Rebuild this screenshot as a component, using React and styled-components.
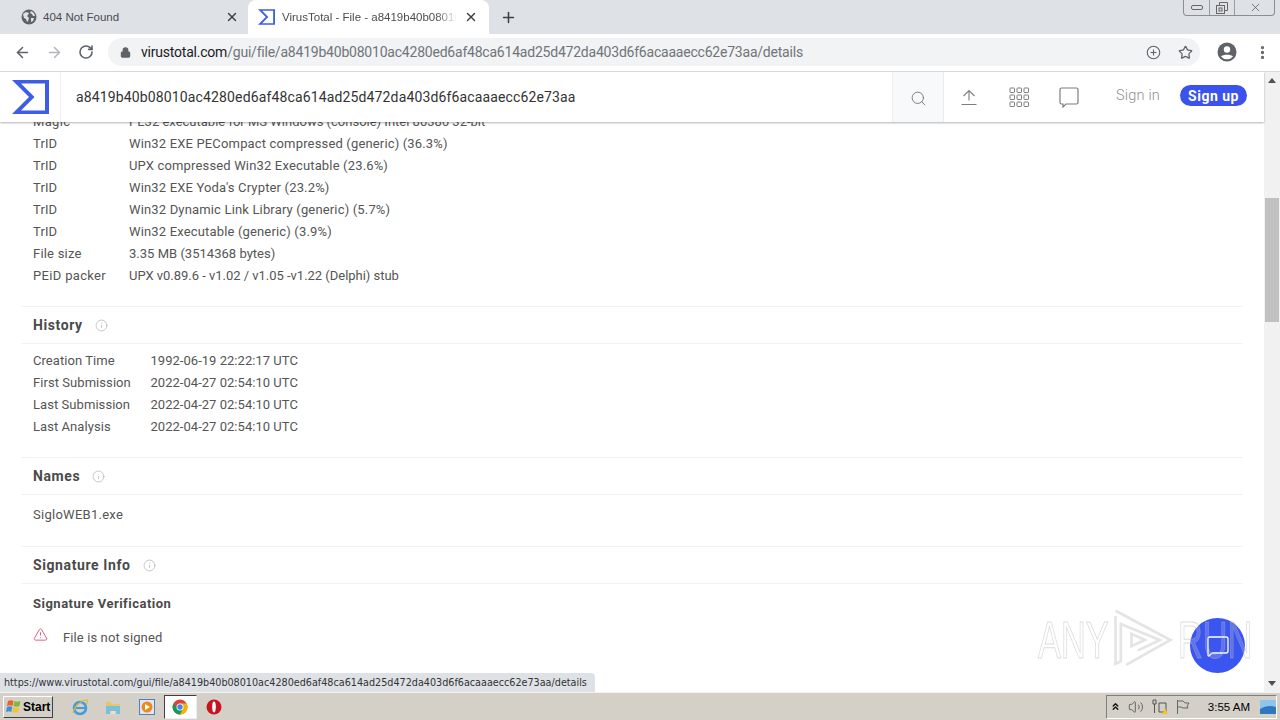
import React from "react";
import styled, { createGlobalStyle } from "styled-components";
import { ArrowLeft, ArrowRight, RotateCw, Lock, X, Plus, Star, MoreVertical, Search, MessageSquare, CirclePlus, Info, TriangleAlert, ChevronsUp, Volume2 } from "lucide-react";

const Global = createGlobalStyle`
  html, body { margin: 0; padding: 0; width: 1280px; height: 720px; overflow: hidden; background: #fff; }
  body { font-family: Roboto, "Liberation Sans", sans-serif; color: #444; }
  * { box-sizing: border-box; }
`;

const Screen = styled.div`
  width: 1280px; height: 720px; display: flex; flex-direction: column; overflow: hidden;
`;
const TabStrip = styled.div`
  height: 34px; background: #dee1e6; display: flex; align-items: stretch; padding-left: 8px; position: relative; flex: none;
`;
const Tab = styled.div`
  width: ${p => p.$w}px; display: flex; align-items: center; padding: 0 ${p => p.$pr}px 0 ${p => p.$pl}px; gap: ${p => p.$gap}px;
  background: ${p => (p.$active ? "#fff" : "transparent")};
  border-radius: 8px 8px 0 0;
  font: 11.5px "Liberation Sans", sans-serif; color: #4a4d52;
`;
const TabTitle = styled.span`
  flex: 1; white-space: nowrap; overflow: hidden;
  ${p => p.$fade && "-webkit-mask-image: linear-gradient(90deg,#000 88%,transparent);"}
`;
const NewTab = styled.div`
  display: flex; align-items: center; margin-left: 11px; color: #3c4043;
`;
const WinControls = styled.div`
  position: absolute; right: 5px; top: 0; width: 92px; height: 16px; display: grid; grid-template-columns: 25px 25px 42px;
  border: 1px solid #8a8d93; border-top: 0; border-radius: 0 0 4px 4px; color: #555;
`;
const WinBtn = styled.div`
  display: flex; align-items: center; justify-content: center;
  & + & { border-left: 1px solid #9a9da3; }
`;
const Toolbar = styled.div`
  height: 38px; background: #fff; border-bottom: 1px solid #d5d7da; display: flex; align-items: center; flex: none; padding: 0 0 1px 14px;
`;
const NavIcons = styled.div`
  display: flex; align-items: center; gap: 15px; width: 94px; color: #5f6368;
`;
const Omnibox = styled.div`
  width: 1092px; height: 28px; border-radius: 14px; background: #f1f3f4; display: flex; align-items: center; padding: 0 7px 0 12px; gap: 10px;
`;
const Url = styled.div`
  flex: 1; font: 14px Roboto, sans-serif; color: #70757a; white-space: nowrap; letter-spacing: -0.215px;
  b { font-weight: 400; color: #202124; }
`;
const OmniIcons = styled.div`
  display: flex; gap: 17px; align-items: center; color: #5f6368;
`;
const ToolEnd = styled.div`
  display: flex; align-items: center; gap: 17px; margin-left: 17px; color: #5f6368;
`;
const Viewport = styled.div`
  flex: 1; min-height: 0; display: flex; position: relative; overflow: hidden;
`;
const Main = styled.div`
  flex: 1; min-width: 0; display: flex; flex-direction: column; position: relative;
`;
const Header = styled.header`
  height: 50px; background: #fff; display: flex; align-items: stretch; flex: none; position: relative; z-index: 2;
  box-shadow: 0 1px 2px rgba(0,0,0,.3);
`;
const LogoCell = styled.div`
  width: 61px; border-right: 1px solid #eeeeee; display: flex; align-items: center; justify-content: center;
`;
const HashInput = styled.div`
  flex: 1; padding-left: 15px; display: flex; align-items: center; font: 14px Roboto, sans-serif; color: #333; letter-spacing: 0.14px;
`;
const SearchCell = styled.div`
  width: 52px; background: #f8f9fa; border-left: 1px solid #ececec; border-right: 1px solid #ececec; display: flex; align-items: center; justify-content: center; color: #777; padding-top: 3px;
`;
const HeaderIcons = styled.div`
  display: flex; align-items: center; width: 172px; color: #777;
`;
const IconCell = styled.div`
  width: 50px; display: flex; justify-content: center; align-items: center;
`;
const HeaderAuth = styled.div`
  display: flex; align-items: center;
`;
const SignIn = styled.div`
  width: 64px; font: 300 14.5px Roboto, sans-serif; color: #8f8f8f; letter-spacing: .2px; padding-bottom: 4px;
`;
const SignUp = styled.div`
  width: 67px; height: 21px; background: #3b52ec; color: #fff; border-radius: 11px; font: 700 14px Roboto, sans-serif;
  display: flex; align-items: center; justify-content: center; letter-spacing: .5px; margin-right: 17px; margin-bottom: 3px;
`;
const Content = styled.div`
  flex: 1; min-height: 0; overflow: hidden; padding: 0 21px;
`;
const Inner = styled.div`
  margin-top: -12px; font: 13px Roboto, sans-serif; color: #555;
`;
const Block = styled.div`
  padding: ${p => p.$top || 0}px 12px ${p => p.$bottom || 0}px;
`;
const Row = styled.div`
  display: grid; grid-template-columns: ${p => p.$label}px 1fr; height: 22px; line-height: 22px; padding-top: 1px; white-space: nowrap;
`;
const Cell = styled.span`
  letter-spacing: ${p => p.$ls}px;
`;
const SectionHead = styled.div`
  height: 38px; border-top: 1px solid #f2f2f2; border-bottom: 1px solid #f2f2f2; padding: 0 12px; display: flex; align-items: center; gap: 12px;
  font: 700 14px Roboto, sans-serif; color: #4a4a4a; letter-spacing: .6px;
`;
const HeadInfo = styled.span`
  display: flex; color: #b5b5b5;
`;
const SubHead = styled.div`
  font: 700 13px Roboto, sans-serif; color: #4a4a4a; letter-spacing: .5px; height: 22px; line-height: 22px; padding: 1px 12px 0; margin-top: 8px;
`;
const Warn = styled.div`
  display: flex; align-items: center; gap: 15px; height: 22px; padding: 0 12px; margin-top: 12px; letter-spacing: .11px; color: #555;
  svg { color: #e0567a; position: relative; top: -3px; }
`;
const Scrollbar = styled.div`
  width: 16px; flex: none; background: #f1f1f1; display: flex; flex-direction: column; justify-content: space-between; align-items: center; position: relative; padding: 6px 0;
`;
const Thumb = styled.div`
  position: absolute; left: 1px; right: 1px; top: 126px; height: 124px; background: #c1c1c1;
`;
const Arrow = styled.div`
  width: 0; height: 0; border-left: 4px solid transparent; border-right: 4px solid transparent;
  ${p => (p.$up ? "border-bottom: 5px solid #505050;" : "border-top: 5px solid #505050;")}
`;
const StatusBubble = styled.div`
  position: absolute; left: 0; bottom: 0; width: 595px; height: 19px; background: #dee1e6; border-radius: 0 4px 0 0; z-index: 3;
  font: 9.65px "DejaVu Sans", sans-serif; color: #333; display: flex; align-items: center; padding-left: 4px; white-space: nowrap;
`;
const ChatBubble = styled.div`
  position: absolute; left: 1190px; top: 546px; width: 55px; height: 55px; border-radius: 50%; background: #3a55f0; z-index: 3; display: flex; align-items: center; justify-content: center;
  color: #fff;
`;
const Watermark = styled.div`
  position: absolute; left: 1038px; top: 537px; z-index: 4; display: flex; align-items: center; height: 62px; pointer-events: none;
`;
const WatermarkWord = styled.span`
  display: inline-block; width: ${p => p.$w}px; transform: scaleX(.66); transform-origin: left center;
  font: 400 52px "Liberation Sans", sans-serif; color: rgba(255,255,255,.18); -webkit-text-stroke: 1px rgba(175,175,175,.45); white-space: nowrap;
`;
const Taskbar = styled.div`
  height: 28px; flex: none; background: #d4d0c8; border-top: 1px solid #f4f2ee; display: flex; align-items: center; padding: 0 3px 0 3px;
`;
const StartBtn = styled.div`
  width: 50px; height: 22px; background: #d4d0c8; border: 1px solid; border-color: #fff #404040 #404040 #fff; display: flex; align-items: center; gap: 0; padding-left: 1px;
  font: 700 12px "Liberation Sans", sans-serif; color: #000;
`;
const QuickLaunch = styled.div`
  display: flex; align-items: center; margin-left: 10px; flex: 1;
`;
const QuickIcon = styled.div`
  width: 33.5px; height: 24px; display: flex; align-items: center; justify-content: center;
  ${p => p.$active && "background:#fff; border:1px solid; border-color:#404040 #eee #eee #404040;"}
`;
const Tray = styled.div`
  width: 171px; height: 24px; border: 1px solid; border-color: #808080 #fff #fff #808080; display: flex; align-items: center; padding-left: 3px;
  font: 11.5px "Liberation Sans", sans-serif; color: #000;
`;
const TrayIcons = styled.div`
  display: flex; align-items: center; gap: 7px; color: #555;
`;
const Clock = styled.div`
  margin-left: auto; margin-right: 10px;
`;

const Sigma = ({ size, h }) => (
  <svg width={size} height={h} viewBox="0 0 37 34">
    <path fillRule="evenodd" fill="#3f5ce6" d="M0 0H37V34H0L17 17ZM9 3.5 22.5 17 9 30.5H33V3.5Z" />
  </svg>
);
const Globe = () => (
  <svg width="16" height="16" viewBox="0 0 16 16">
    <circle cx="8" cy="8" r="7.5" fill="#5f6368" />
    <path fill="#dee1e6" d="M2 5l3-2 3 1-1 2-1 1 2 2-1 3-1 1-1-3-2-1ZM10 2l3 2 1 3-2 0-1-2-2-1ZM10 9l3 0-1 3-2 1Z" />
  </svg>
);
const UploadIcon = () => (
  <svg width="18" height="18" viewBox="0 0 18 18" fill="none" stroke="#7d7d7d" strokeWidth="1.1">
    <path d="M9 12.5V3M3.5 8 9 2.5 14.5 8M1.5 16.5h15" />
  </svg>
);
const GridIcon = () => (
  <svg width="20" height="20" viewBox="0 0 20 20" fill="none" stroke="#7d7d7d" strokeWidth="1">
    {[0, 7, 14].flatMap(y => [0, 7, 14].map(x => <rect key={`${x}-${y}`} x={x + 1} y={y + 1} width="4.5" height="4.5" rx=".6" />))}
  </svg>
);
const CommentIcon = () => (
  <svg width="20" height="21" viewBox="0 0 20 21" fill="none" stroke="#7d7d7d" strokeWidth="1.2">
    <path d="M2.5 1h15a1.5 1.5 0 0 1 1.5 1.5v13a1.5 1.5 0 0 1-1.5 1.5H7l-3 3v-3H2.5A1.5 1.5 0 0 1 1 15.5v-13A1.5 1.5 0 0 1 2.5 1Z" />
  </svg>
);
const Profile = () => (
  <svg width="20" height="20" viewBox="0 0 20 20">
    <circle cx="10" cy="10" r="9.5" fill="#5f6368" />
    <circle cx="10" cy="7.5" r="3.2" fill="#fff" />
    <path fill="#fff" d="M4 14.5c1.5-2.3 10.5-2.3 12 0a7.7 7.7 0 0 1-12 0Z" />
  </svg>
);
const WinFlag = () => (
  <svg width="18" height="16" viewBox="0 0 18 16">
    <path fill="#e8622c" d="M3 2c2-1 4-1 5.5 0l-1 5C6 6 4 6 2 7Z" />
    <path fill="#7db93b" d="M9.5 2c2 1 4 1 6 0l-1 5c-2 1-4 1-6 0Z" />
    <path fill="#3a8fd6" d="M2 8c2-1 4-1 5.3 0l-1 5c-1.5-1-3.3-1-5.3 0Z" />
    <path fill="#f4c430" d="M8.3 8c2 1 4 1 6 0l-1 5c-2 1-4 1-6 0Z" />
  </svg>
);
const IE = () => (
  <svg width="18" height="18" viewBox="0 0 18 18" fill="none">
    <circle cx="9" cy="10" r="6" stroke="#3f9fdc" strokeWidth="2.6" />
    <path d="M4 10h10" stroke="#3f9fdc" strokeWidth="2" />
    <path d="M2 15C3 9 10 2 16 2c1 1 0 3-1 5" stroke="#e3b23c" strokeWidth="1.2" />
  </svg>
);
const Folder = () => (
  <svg width="16" height="16" viewBox="0 0 16 16">
    <path fill="#e8c66a" d="M1 3h5l1 2h8v3H1Z" />
    <path fill="#7cc0d8" d="M1 7h14v8h-4v-3H5v3H1Z" />
    <rect x="6" y="12" width="4" height="3" fill="#e6e2d2" />
  </svg>
);
const Media = () => (
  <svg width="16" height="16" viewBox="0 0 16 16">
    <rect x=".5" y=".5" width="15" height="15" fill="#dfe8f2" stroke="#4f81bd" />
    <circle cx="8" cy="8" r="5.5" fill="#ec8a1e" />
    <path d="M6 5l5 3-5 3Z" fill="#fff" />
  </svg>
);
const ChromeIcon = () => (
  <svg width="16" height="16" viewBox="0 0 16 16">
    <circle cx="8" cy="8" r="7.5" fill="#db4437" />
    <path fill="#0f9d58" d="M1.5 4.5A7.5 7.5 0 0 0 8 15.5l3-6H5.5Z" />
    <path fill="#f4b400" d="M8 15.5A7.5 7.5 0 0 0 14.7 4.5H8l3 5Z" />
    <circle cx="8" cy="8" r="3.5" fill="#fff" />
    <circle cx="8" cy="8" r="2.7" fill="#4285f4" />
  </svg>
);
const Opera = () => (
  <svg width="16" height="16" viewBox="0 0 16 16">
    <circle cx="8" cy="8" r="7.5" fill="#c8141e" />
    <ellipse cx="8" cy="8" rx="1.8" ry="5.4" fill="#fff" />
  </svg>
);
const TrayFlag = () => (
  <svg width="16" height="16" viewBox="0 0 16 16" fill="none" stroke="#666">
    <path d="M2.5 1v14M3 2h5l2 2h4l-2 3 1 2H8L6 8H3" />
  </svg>
);
const Network = () => (
  <svg width="17" height="17" viewBox="0 0 17 17">
    <path fill="none" stroke="#555" d="M2 2h3v4H2ZM3.5 6v9M8 5h7v9H8Z" />
    <path fill="#f2c230" d="M11 16l3-6 3 6Z" />
  </svg>
);
const PlayMark = () => (
  <svg width="70" height="62" viewBox="0 0 78 70" fill="none" stroke="rgba(170,170,170,.32)" strokeWidth="3">
    <path d="M8 8v54l6-3V17l44 18-25 12" />
    <path d="M8 2l62 33-50 28" />
    <path d="M26 28v14l15-7Z" />
  </svg>
);
const Desktop = () => (
  <svg width="16" height="14" viewBox="0 0 16 14">
    <rect width="16" height="14" fill="#2f78c0" />
    <path fill="#8cc6ee" d="M0 0h16v7C10 5 5 6 0 9Z" />
  </svg>
);

const trid = [
  "Win32 EXE PECompact compressed (generic) (36.3%)",
  "UPX compressed Win32 Executable (23.6%)",
  "Win32 EXE Yoda's Crypter (23.2%)",
  "Win32 Dynamic Link Library (generic) (5.7%)",
  "Win32 Executable (generic) (3.9%)",
];
const history = [
  ["Creation Time", "1992-06-19 22:22:17 UTC"],
  ["First Submission", "2022-04-27 02:54:10 UTC"],
  ["Last Submission", "2022-04-27 02:54:10 UTC"],
  ["Last Analysis", "2022-04-27 02:54:10 UTC"],
];
const hash = "a8419b40b08010ac4280ed6af48ca614ad25d472da403d6f6acaaaecc62e73aa";

export default function App() {
  return (
    <Screen>
      <Global />
      <TabStrip>
        <Tab $w={240} $pl={13} $pr={9} $gap={6}>
          <Globe />
          <TabTitle>404 Not Found</TabTitle>
          <X size={14} strokeWidth={2.4} color="#3c4043" />
        </Tab>
        <Tab $w={241} $pl={10} $pr={11} $gap={7} $active>
          <Sigma size={17} h={16} />
          <TabTitle $fade>VirusTotal - File - a8419b40b08010ac4280ed6af48ca614ad25d472</TabTitle>
          <X size={14} strokeWidth={2.4} color="#3c4043" />
        </Tab>
        <NewTab><Plus size={17} strokeWidth={2.2} /></NewTab>
        <WinControls>
          <WinBtn><svg width="12" height="6"><rect x=".5" y=".5" width="11" height="4" rx="1.5" fill="none" stroke="#666" /></svg></WinBtn>
          <WinBtn><svg width="12" height="12" fill="none" stroke="#666"><path d="M3.5 3V.5h8v8H9" /><rect x=".5" y="3.5" width="8" height="8" /><rect x="3" y="6" width="3" height="3" /></svg></WinBtn>
          <WinBtn><X size={13} strokeWidth={1.4} /></WinBtn>
        </WinControls>
      </TabStrip>
      <Toolbar>
        <NavIcons>
          <ArrowLeft size={17} strokeWidth={2.2} />
          <ArrowRight size={17} strokeWidth={2.2} color="#b4b7bb" />
          <RotateCw size={16} strokeWidth={2.4} />
        </NavIcons>
        <Omnibox>
          <Lock size={11} fill="#5f6368" color="#5f6368" strokeWidth={2.5} />
          <Url><b>virustotal.com</b>/gui/file/{hash}/details</Url>
          <OmniIcons>
            <CirclePlus size={15} strokeWidth={1.8} />
            <Star size={15} strokeWidth={2} />
          </OmniIcons>
        </Omnibox>
        <ToolEnd>
          <Profile />
          <MoreVertical size={17} strokeWidth={2.6} />
        </ToolEnd>
      </Toolbar>
      <Viewport>
        <Main>
          <Header>
            <LogoCell><Sigma size={37} h={34} /></LogoCell>
            <HashInput>{hash}</HashInput>
            <SearchCell><Search size={17} strokeWidth={1.3} /></SearchCell>
            <HeaderIcons>
              <IconCell><UploadIcon /></IconCell>
              <IconCell><GridIcon /></IconCell>
              <IconCell><CommentIcon /></IconCell>
            </HeaderIcons>
            <HeaderAuth>
              <SignIn>Sign in</SignIn>
              <SignUp>Sign up</SignUp>
            </HeaderAuth>
          </Header>
          <Content>
            <Inner>
              <Block $bottom={20}>
                <Row $label={96}><Cell $ls={0.33}>Magic</Cell><Cell $ls={0}>PE32 executable for MS Windows (console) Intel 80386 32-bit</Cell></Row>
                {trid.map(t => <Row key={t} $label={96}><Cell $ls={0.1}>TrID</Cell><Cell $ls={0.16}>{t}</Cell></Row>)}
                <Row $label={96}><Cell $ls={0.2}>File size</Cell><Cell $ls={0.02}>3.35 MB (3514368 bytes)</Cell></Row>
                <Row $label={96}><Cell $ls={0.33}>PEiD packer</Cell><Cell $ls={-0.02}>UPX v0.89.6 - v1.02 / v1.05 -v1.22 (Delphi) stub</Cell></Row>
              </Block>
              <SectionHead>History <HeadInfo><Info size={13} strokeWidth={1.4} /></HeadInfo></SectionHead>
              <Block $top={5} $bottom={20}>
                {history.map(([a, b]) => <Row key={a} $label={117.5}><Cell $ls={0.06}>{a}</Cell><Cell $ls={0.03}>{b}</Cell></Row>)}
              </Block>
              <SectionHead>Names <HeadInfo><Info size={13} strokeWidth={1.4} /></HeadInfo></SectionHead>
              <Block $top={8} $bottom={21}>
                <Row $label={200}><Cell $ls={0.27}>SigloWEB1.exe</Cell></Row>
              </Block>
              <SectionHead>Signature Info <HeadInfo><Info size={13} strokeWidth={1.4} /></HeadInfo></SectionHead>
              <SubHead>Signature Verification</SubHead>
              <Warn><TriangleAlert size={15} strokeWidth={1.5} />File is not signed</Warn>
            </Inner>
          </Content>
        </Main>
        <Scrollbar>
          <Arrow $up />
          <Thumb />
          <Arrow />
        </Scrollbar>
        <StatusBubble>https://www.virustotal.com/gui/file/{hash}/details</StatusBubble>
        <ChatBubble><MessageSquare size={24} strokeWidth={1.3} /></ChatBubble>
        <Watermark>
          <WatermarkWord $w={70}>ANY</WatermarkWord>
          <PlayMark />
          <WatermarkWord $w={65}>RUN</WatermarkWord>
        </Watermark>
      </Viewport>
      <Taskbar>
        <StartBtn><WinFlag />Start</StartBtn>
        <QuickLaunch>
          <QuickIcon><IE /></QuickIcon>
          <QuickIcon><Folder /></QuickIcon>
          <QuickIcon><Media /></QuickIcon>
          <QuickIcon $active><ChromeIcon /></QuickIcon>
          <QuickIcon><Opera /></QuickIcon>
        </QuickLaunch>
        <Tray>
          <TrayIcons>
            <ChevronsUp size={11} strokeWidth={3} color="#111" />
            <Volume2 size={16} strokeWidth={1.3} />
            <Network />
            <TrayFlag />
          </TrayIcons>
          <Clock>3:55 AM</Clock>
          <Desktop />
        </Tray>
      </Taskbar>
    </Screen>
  );
}
